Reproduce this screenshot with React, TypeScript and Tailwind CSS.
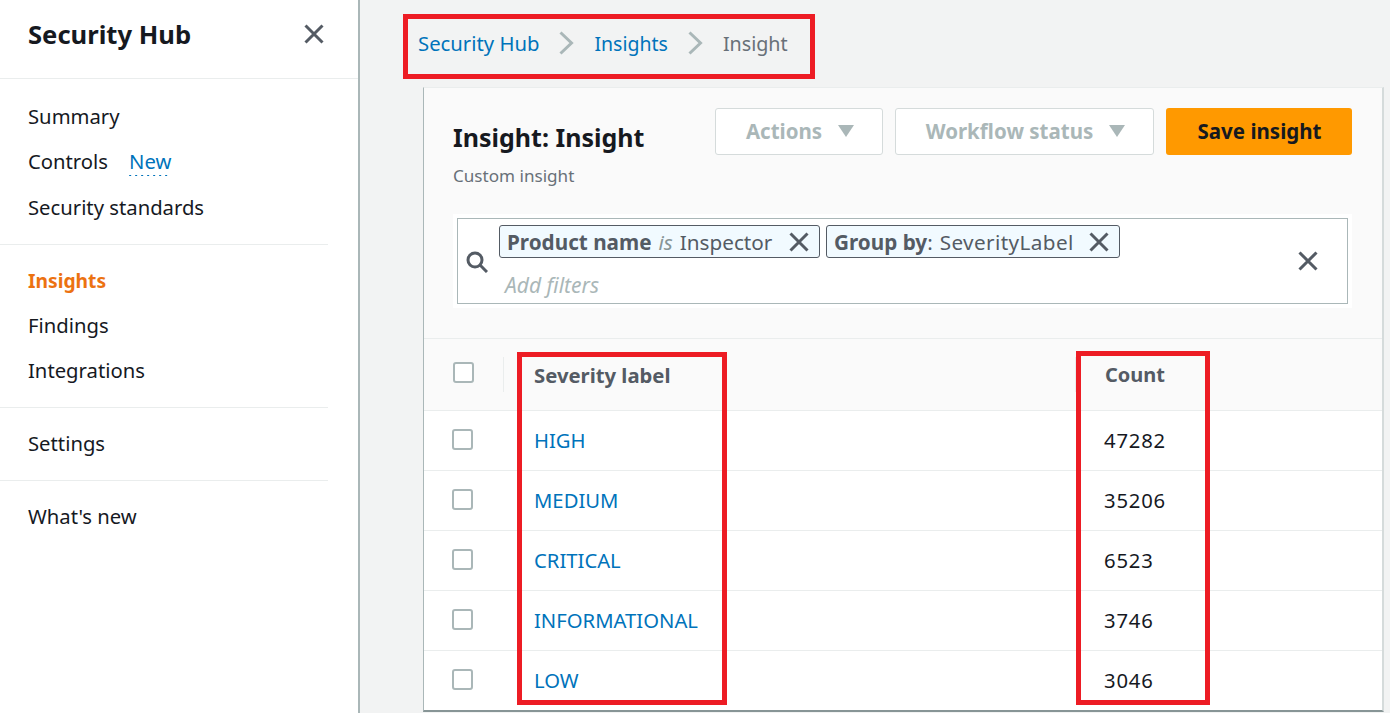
const font = "font-['Noto_Sans','Open_Sans',sans-serif]"

const rows = [
  { label: 'HIGH', count: '47282' },
  { label: 'MEDIUM', count: '35206' },
  { label: 'CRITICAL', count: '6523' },
  { label: 'INFORMATIONAL', count: '3746' },
  { label: 'LOW', count: '3046' },
]

function CloseIcon({ className }: { className: string }) {
  return (
    <svg viewBox="0 0 20 20" fill="none" stroke="#545b64" strokeWidth="3" className={className}>
      <path d="M1.5 1.5l17 17M18.5 1.5l-17 17" />
    </svg>
  )
}

function Chevron() {
  return (
    <svg viewBox="0 0 15 24" fill="none" stroke="#aab7b8" strokeWidth="3" className="w-[15px] h-6 mx-[20px]">
      <path d="M1.5 1.5l11 10.5-11 10.5" />
    </svg>
  )
}

function Caret() {
  return (
    <svg viewBox="0 0 16 12" className="w-4 h-3 ml-4" fill="#aab7b8">
      <path d="M0 0h16l-8 12z" />
    </svg>
  )
}

function Checkbox() {
  return <div className="w-[21px] h-[21px] bg-white border-2 border-[#aab7b8] rounded-[3px]" />
}

function NavItem({ label, active }: { label: string; active?: boolean }) {
  return (
    <div className={`h-[45px] flex items-center pl-7 ${active ? 'pt-[2px] text-[19.25px] font-bold text-[#ec7211]' : 'text-[20.25px] text-[#16191f]'}`}>
      {label}
    </div>
  )
}

function Token({ name, children, width }: { name: string; children: React.ReactNode; width: string }) {
  return (
    <div className={`${width} h-[33px] flex items-center justify-between pl-[7px] pr-[10px] bg-[#f1faff] border border-[#545b64] rounded-[3px] text-[20.7px] text-[#545b64]`}>
      <span className="whitespace-nowrap mt-[2px]">
        <b>{name}</b>
        {children}
      </span>
      <CloseIcon className="w-[20px] h-[20px]" />
    </div>
  )
}

export default function App() {
  return (
    <div className={`${font} relative flex h-screen overflow-hidden bg-[#f2f3f3]`}>
      {/* side nav */}
      <div className="w-[360px] shrink-0 bg-white border-r-2 border-[#aab7b8]">
        <div className="h-[79px] flex items-start justify-between pl-7 pr-[34px] pt-[15px] border-b border-[#eaeded]">
          <h1 className="text-[25.6px] leading-[40px] font-bold text-[#16191f]">Security Hub</h1>
          <CloseIcon className="w-[20px] h-[20px] mt-[9px]" />
        </div>
        <div className="pt-[15px] pr-[30px]">
          <NavItem label="Summary" />
          <div className="h-[46px] pb-[2px] flex items-center pl-7 text-[20.25px] text-[#16191f]">
            Controls
            <span className="ml-[21px] pb-[1px] leading-[28px] text-[#0073bb] bg-[linear-gradient(to_right,#0073bb_2px,transparent_2px)] bg-[length:6px_1px] bg-bottom bg-repeat-x">New</span>
          </div>
          <NavItem label="Security standards" />
          <div className="mt-[14px] mb-[13px] border-t border-[#eaeded]" />
          <NavItem label="Insights" active />
          <NavItem label="Findings" />
          <NavItem label="Integrations" />
          <div className="mt-[14px] mb-[13px] border-t border-[#eaeded]" />
          <NavItem label="Settings" />
          <div className="mt-[14px] mb-[13px] border-t border-[#eaeded]" />
          <NavItem label="What's new" />
        </div>
      </div>

      {/* main */}
      <div className="flex-1 min-w-0">
        <div className="h-[87px] pl-[58px] pt-[23px] flex items-start leading-[40px]">
          <span className="text-[20.3px] text-[#0073bb]">Security Hub</span>
          <div className="h-10 flex items-center"><Chevron /></div>
          <span className="pt-[1px] text-[19.5px] text-[#0073bb]">Insights</span>
          <div className="h-10 flex items-center"><Chevron /></div>
          <span className="pt-[1px] text-[19.7px] text-[#687078]">Insight</span>
        </div>

        <div className="ml-[63px] mr-[6px] h-[625px] bg-white border-t border-l border-r-2 border-b-2 border-t-[#eaeded] border-l-[#aab7b8] border-r-[#d5dbdb] border-b-[#879596]">
          <div className="bg-[#fafafa] h-[251px] border-b border-[#eaeded] pl-[29px] pr-[30px] pt-[20px]">
            <div className="flex items-start justify-between">
              <div>
                <h2 className="text-[25px] leading-[36px] mt-[11px] font-bold text-[#16191f]">Insight: Insight</h2>
                <div className="text-[17.1px] leading-[24px] mt-[9px] text-[#687078]">Custom insight</div>
              </div>
              <div className="flex gap-3">
                <div className="w-[168px] h-[47px] pb-[1px] pl-[2px] flex items-center justify-center bg-white border border-[#d5dbdb] rounded-[3px] text-[20.5px] font-bold text-[#aab7b8]">
                  Actions<Caret />
                </div>
                <div className="w-[259px] h-[47px] pb-[1px] pl-[2px] flex items-center justify-center bg-white border border-[#d5dbdb] rounded-[3px] text-[20.5px] font-bold text-[#aab7b8]">
                  Workflow status<Caret />
                </div>
                <div className="w-[186px] h-[47px] pb-[1px] pl-[1px] flex items-center justify-center bg-[#ff9900] rounded-[3px] text-[20.5px] font-bold text-[#16191f]">
                  Save insight
                </div>
              </div>
            </div>

            <div className="mt-[30px] ml-1 mr-1 h-[86px] flex bg-white border border-[#aab7b8] shadow-[0_0_0_4px_#fff]">
              <div className="w-[41px] shrink-0 pt-[32px] pl-[8px]">
                <svg viewBox="0 0 22 22" fill="none" stroke="#545b64" strokeWidth="3" className="w-[22px] h-[22px]">
                  <circle cx="9" cy="9" r="7" />
                  <path d="M14 14l7 7" />
                </svg>
              </div>
              <div className="flex-1 pt-[6px]">
                <div className="flex gap-[6px]">
                  <Token name="Product name" width="w-[321px]">
                    <i className="mx-[7px] text-[#879596]">is</i>Inspector
                  </Token>
                  <Token name="Group by" width="w-[294px]">
                    :<span className="ml-[7px] tracking-[0.4px]">SeverityLabel</span>
                  </Token>
                </div>
                <div className="ml-[6px] mt-[13px] text-[21px] leading-[28px] italic text-[#aab7b8]">Add filters</div>
              </div>
              <div className="w-[49px] shrink-0 pt-[32px]">
                <CloseIcon className="w-[20px] h-[20px]" />
              </div>
            </div>
          </div>

          <div className="bg-[#fafafa] h-[72px] flex border-b border-[#eaeded] text-[20.3px] font-bold text-[#545b64]">
            <div className="w-[80px] shrink-0 pl-[29px] pt-[23px] relative">
              <Checkbox />
              <div className="absolute right-0 top-[18px] h-[35px] border-r border-[#eaeded]" />
            </div>
            <div className="w-[572px] shrink-0 pl-[30px] pt-[22px] leading-[28px] relative">
              Severity label
              <div className="absolute right-0 top-[18px] h-[35px] border-r border-[#eaeded]" />
            </div>
            <div className="pl-[29px] pt-[22px] leading-[28px] text-[20px]">Count</div>
          </div>

          {rows.map((r, i) => (
            <div key={r.label} className={`h-[60px] flex items-center text-[20.25px] ${i < rows.length - 1 ? 'border-b border-[#eaeded]' : 'pb-[1px]'}`}>
              <div className="w-[80px] shrink-0 pl-[28px] mb-[2px]"><Checkbox /></div>
              <div className="w-[571px] shrink-0 pl-[30px] text-[#0073bb]">{r.label}</div>
              <div className="pl-[29px] tracking-[0.8px] text-[#16191f]">{r.count}</div>
            </div>
          ))}
        </div>
      </div>

      {/* red annotation boxes */}
      <div className="absolute left-[403px] top-[14px] w-[412px] h-[65px] border-[5px] border-[#ed1c24]" />
      <div className="absolute left-[517px] top-[352px] w-[210px] h-[353px] border-[5px] border-[#ed1c24]" />
      <div className="absolute left-[1076px] top-[351px] w-[134px] h-[354px] border-[5px] border-[#ed1c24]" />
    </div>
  )
}
